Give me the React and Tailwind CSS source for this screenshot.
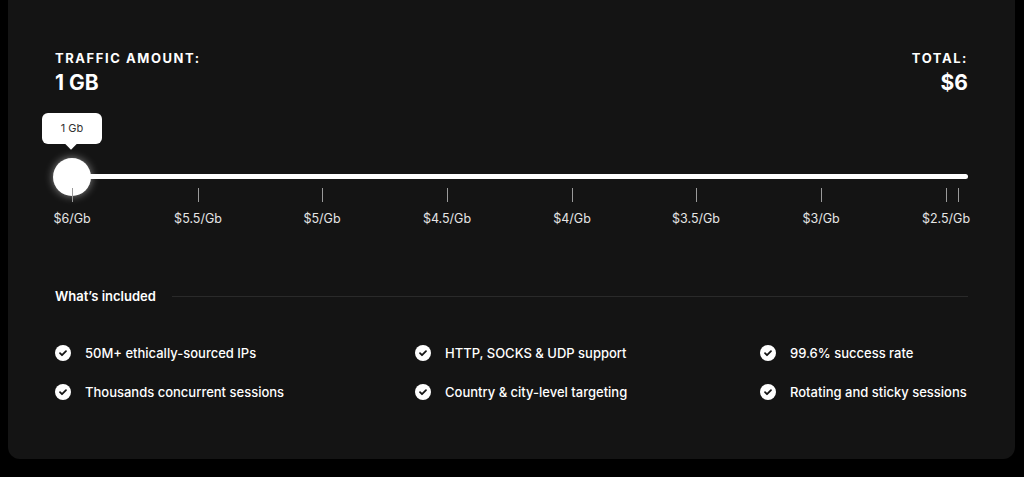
export default function App() {
  const ticks = [
    ["$6/Gb", 0], ["$5.5/Gb", 126], ["$5/Gb", 250], ["$4.5/Gb", 375], ["$4/Gb", 500],
    ["$3.5/Gb", 624], ["$3/Gb", 749], ["$2.5/Gb", 874],
  ];
  const items = [
    "50M+ ethically-sourced IPs", "HTTP, SOCKS & UDP support", "99.6% success rate",
    "Thousands concurrent sessions", "Country & city-level targeting", "Rotating and sticky sessions",
  ];
  const Check = () => (
    <svg width="16" height="16" viewBox="0 0 16 16" className="shrink-0">
      <circle cx="8" cy="8" r="8" fill="white" />
      <path d="M5 8.2l2 2 4-4" stroke="#141414" strokeWidth="1.8" fill="none" strokeLinecap="round" strokeLinejoin="round" />
    </svg>
  );
  return (
    <div className="w-[1024px] h-[477px] bg-black" style={{ fontFamily: "Inter, 'Noto Sans', sans-serif" }}>
      <div className="ml-2 mr-[9px] h-[459px] bg-[#141414] rounded-b-xl px-[47px] pt-[50px] text-white">
        <div className="flex justify-between">
          <div>
            <div className="text-[13px] font-bold tracking-[0.12em] leading-4">TRAFFIC AMOUNT:</div>
            <div className="text-[21px] font-bold leading-7 mt-[3px]">1 GB</div>
          </div>
          <div className="text-right">
            <div className="text-[13px] font-bold tracking-[0.12em] leading-4">TOTAL:</div>
            <div className="text-[21px] font-bold leading-7 mt-[3px]">$6</div>
          </div>
        </div>
        <div className="relative h-[150px] mt-[14px]">
          <div className="absolute left-[-13px] top-[2px] w-[60px] h-[31px] bg-white rounded-md text-[#333] text-[11px] flex items-center justify-center">1 Gb</div>
          <div className="absolute left-[12px] top-[29px] w-2 h-2 bg-white rotate-45"></div>
          <div className="absolute left-[17px] right-0 top-[63px] h-[5px] bg-white rounded-full"></div>
          <div className="absolute left-[-2px] top-[47px] w-[38px] h-[38px] rounded-full bg-white shadow-[0_0_8px_rgba(255,255,255,0.5)]"></div>
          {ticks.map(([l, x]) => (
            <div key={l} className="absolute top-[77px] w-0 flex flex-col items-center" style={{ left: 17 + x }}>
              <div className="w-px h-[14px] bg-[#9a9a9a]"></div>
              <div className="mt-[8px] text-[12.5px] text-[#e5e5e5] whitespace-nowrap">{l}</div>
            </div>
          ))}
          <div className="absolute top-[77px] w-px h-[14px] bg-[#9a9a9a]" style={{ left: 903 }}></div>
        </div>
        <div className="flex items-center gap-4 mt-[26px]">
          <div className="text-[13px] font-semibold">What’s included</div>
          <div className="flex-1 h-px bg-[#2a2a2a]"></div>
        </div>
        <div className="grid grid-cols-[360px_345px_1fr] gap-y-[23px] mt-[38px]">
          {items.map((t) => (
            <div key={t} className="flex items-center gap-[14px] text-[13px] font-medium leading-4">
              <Check />
              <span>{t}</span>
            </div>
          ))}
        </div>
      </div>
    </div>
  );
}
